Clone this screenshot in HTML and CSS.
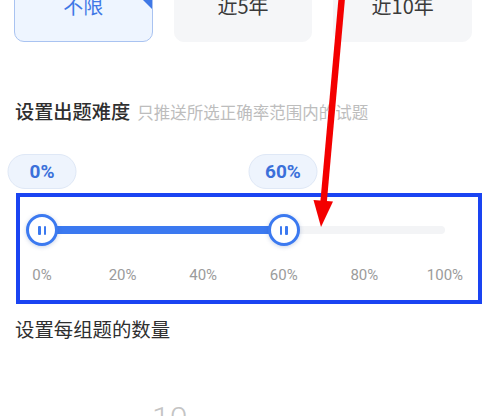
FILE: index.html
```html
<!DOCTYPE html>
<html lang="zh-CN">
<head>
<meta charset="utf-8">
<title>设置</title>
<link rel="stylesheet" href="styles.css">
</head>
<body>
<div class="page">
  <div class="options">
    <div class="option active">不限<span class="corner"></span></div>
    <div class="option">近5年</div>
    <div class="option">近10年</div>
  </div>

  <div class="title-row">
    <span class="title strong">设置出题难度</span>
    <span class="hint">只推送所选正确率范围内的试题</span>
  </div>

  <div class="slider-block">
    <div class="bubble" style="left: 42px">0%</div>
    <div class="bubble" style="left: 283px">60%</div>
    <div class="slider-box">
      <div class="track">
        <div class="rail"></div>
        <div class="fill" style="left: 0%; width: 60%"></div>
        <div class="thumb" style="left: 0%"><i></i><i></i></div>
        <div class="thumb" style="left: 60%"><i></i><i></i></div>
      </div>
      <div class="ticks">
        <span>0%</span><span>20%</span><span>40%</span><span>60%</span><span>80%</span><span>100%</span>
      </div>
    </div>
  </div>

  <div class="title-row second">
    <span class="title">设置每组题的数量</span>
  </div>

  <div class="picker">10</div>

  <svg class="arrow" width="499" height="416" viewBox="0 0 499 416" aria-hidden="true">
    <line x1="342.5" y1="-10" x2="323.5" y2="203" stroke="#f40000" stroke-width="6.5"/>
    <polygon points="313.5,200 333,201.5 321,227" fill="#f40000"/>
  </svg>
</div>
</body>
</html>
```

FILE: styles.css
```css
html, body {
  margin: 0;
  padding: 0;
  background: #ffffff;
  overflow: hidden;
}

body {
  width: 499px;
  height: 416px;
  font-family: "Noto Sans CJK SC", "Noto Sans", sans-serif;
  color: #333333;
}

.page {
  position: relative;
  width: 499px;
  height: 416px;
  overflow: hidden;
}

.options {
  display: flex;
  gap: 21px;
  margin: -32px 0 0 14px;
  width: 458px;
}

.option {
  position: relative;
  flex: 1 1 0;
  height: 74px;
  box-sizing: border-box;
  border-radius: 10px;
  background: #f5f6f8;
  border: 1px solid #f5f6f8;
  display: flex;
  align-items: center;
  justify-content: center;
  font-size: 20px;
  color: #3a3a3a;
  overflow: hidden;
}

.option.active {
  background: #eef5ff;
  border-color: #a9c3f1;
  color: #3f78e6;
}

.corner {
  position: absolute;
  top: 0;
  right: 0;
  width: 0;
  height: 0;
  border-style: solid;
  border-width: 0 40px 40px 0;
  border-color: transparent #3f78e6 transparent transparent;
}

.title-row {
  display: flex;
  align-items: baseline;
  gap: 7px;
  margin: 55px 0 0 15px;
  line-height: 28px;
}

.title {
  font-size: 19.4px;
  color: #2f2f2f;
}

.title.strong {
  font-weight: 500;
  font-size: 19.2px;
}

.hint {
  font-size: 16.5px;
  color: #bdbdbd;
}

.slider-block {
  position: relative;
  margin-top: 28px;
  padding-top: 39px;
}

.bubble {
  position: absolute;
  top: 0;
  width: 69px;
  height: 35px;
  box-sizing: border-box;
  transform: translateX(-50%);
  border-radius: 18px;
  background: #eef4fd;
  border: 1px solid #dfe8f6;
  display: flex;
  align-items: center;
  justify-content: center;
  font-family: "Roboto", "Noto Sans", sans-serif;
  font-weight: 700;
  font-size: 19px;
  color: #3b70da;
}

.slider-box {
  margin-left: 16px;
  width: 466px;
  height: 111px;
  box-sizing: border-box;
  border: 4px solid #1a44f2;
  padding: 17px 33px 0 22px;
}

.track {
  position: relative;
  height: 32px;
  display: flex;
  align-items: center;
}

.rail {
  flex: 1;
  height: 8px;
  border-radius: 4px;
  background: #f3f4f6;
}

.fill {
  position: absolute;
  top: 12px;
  height: 8px;
  background: #3b79f0;
}

.thumb {
  position: absolute;
  top: 0;
  width: 32px;
  height: 32px;
  box-sizing: border-box;
  transform: translateX(-50%);
  border-radius: 50%;
  border: 3.5px solid #3b79f0;
  background: #ffffff;
  box-shadow: 0 1px 4px rgba(40, 80, 160, 0.25);
  display: flex;
  align-items: center;
  justify-content: center;
  gap: 3px;
}

.thumb i {
  display: block;
  width: 2.5px;
  height: 9px;
  border-radius: 1px;
  background: #3b79f0;
}

.ticks {
  display: flex;
  margin: 20px 0 0 -40.3px;
  width: 483.6px;
  line-height: 18px;
}

.ticks span {
  flex: 0 0 80.6px;
  text-align: center;
  font-family: "Roboto", "Noto Sans", sans-serif;
  font-size: 15px;
  color: #9b9b9b;
}

.title-row.second {
  margin-top: 11px;
}

.picker {
  margin: 59px 0 0 152px;
  font-family: "Roboto", "Noto Sans", sans-serif;
  font-size: 32px;
  font-weight: 300;
  line-height: 32px;
  color: #c4c4c4;
}

.arrow {
  position: absolute;
  top: 0;
  left: 0;
  pointer-events: none;
}
```
